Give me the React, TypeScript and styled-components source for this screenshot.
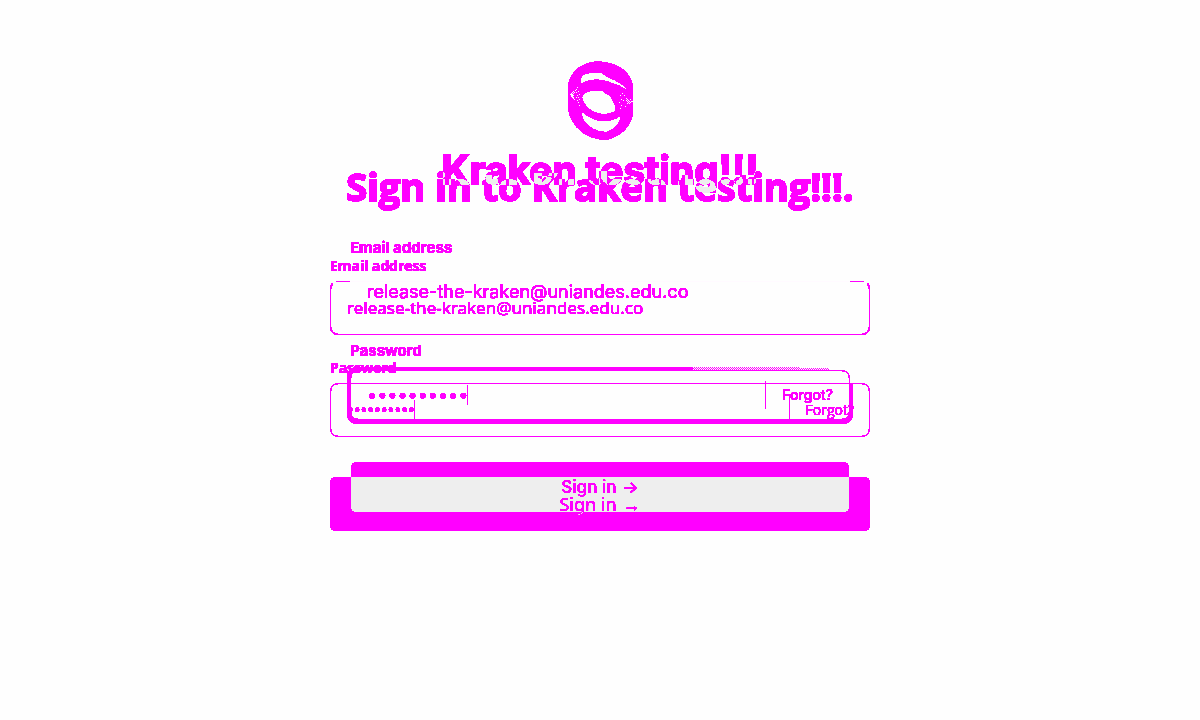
import React from 'react';
import styled, { createGlobalStyle, css } from 'styled-components';

const INK = '#ff00ff';

const GlobalStyle = createGlobalStyle`
  *, *::before, *::after { box-sizing: border-box; }
  html, body { margin: 0; min-height: 100%; background: #fefefe; }
`;

/* Turns every partly covered pixel into a fully inked one. */
const hardEdge = css`
  filter: url(#hard-edge);
`;

const Page = styled.main`
  min-height: 100vh;
  padding: 50px 16px;
  display: flex;
  flex-direction: column;
  align-items: center;
  isolation: isolate;
  filter: url(#diff-colours);
`;

const Defs = styled.svg`
  position: absolute;
  width: 0;
  height: 0;
`;

const Logo = styled.svg`
  width: 100px;
  height: 100px;
  flex: none;
`;

const Versions = styled.div`
  width: 100%;
  display: grid;
  justify-items: center;
  align-items: start;
`;

type Side = { $after?: boolean };

const Form = styled.form<Side>`
  grid-area: 1 / 1;
  width: 100%;
  max-width: ${p => (p.$after ? 500 : 540)}px;
  padding-top: ${p => (p.$after ? 0 : 16)}px;
  display: flex;
  flex-direction: column;
  font-family: ${p => (p.$after ? 'Inter' : '"Noto Sans"')}, sans-serif;
  color: ${INK};
`;

const Title = styled.h1<Side>`
  margin: 0 0 ${p => (p.$after ? 48 : 50)}px;
  font-family: ${p => (p.$after ? 'Inter' : '"Open Sans"')}, sans-serif;
  font-size: ${p => (p.$after ? 39 : 38)}px;
  line-height: 40px;
  font-weight: 700;
  -webkit-text-stroke: 1px ${INK};
  text-align: center;
  white-space: nowrap;
  align-self: center;
  ${hardEdge}
  mix-blend-mode: ${p => (p.$after ? 'difference' : 'normal')};
`;

const Label = styled.label<Side>`
  margin-bottom: ${p => (p.$after ? 9 : 5)}px;
  font-size: ${p => (p.$after ? 15 : 14)}px;
  line-height: 20px;
  font-weight: 700;
  ${hardEdge}
`;

const Field = styled.div<Side & { $merged?: boolean; $focused?: boolean }>`
  position: relative;
  height: ${p => (p.$after ? 50 : 54)}px;
  margin-bottom: ${p => (p.$after ? 24 : 23)}px;
  padding: 0 ${p => (p.$after ? 16 : 15)}px 0 16px;
  display: flex;
  align-items: center;
  border: 1px solid ${p => (p.$after && !p.$focused ? 'transparent' : INK)};
  border-radius: 8px;
  ${hardEdge}
  ${p => p.$merged && css`
    border-top-color: transparent;
    background: linear-gradient(90deg, ${INK} 14px, #fafafa 14px, #fafafa calc(100% - 14px), ${INK} calc(100% - 14px))
      center top / calc(100% - 12px) 1px no-repeat border-box;
  `}
`;

const FocusRing = styled.span`
  position: absolute;
  inset: -4px -4px -5px;
  border: 4px solid ${INK};
  border-radius: 10px;
  clip-path: polygon(0 0, 346px 0, 346px 16px, 100% 16px, 100% 100%, 0 100%);
  pointer-events: none;
`;

const RingFade = styled.span`
  position: absolute;
  top: -4px;
  right: 20px;
  width: 136px;
  height: 3px;
  background: repeating-conic-gradient(${INK} 0 25%, transparent 0 50%) 0 0 / 2px 2px;
  clip-path: polygon(0 0, 50% 0, 100% 60%, 100% 100%, 0 100%);
`;

const Input = styled.input<{ $width?: number }>`
  ${p => (p.$width ? css`width: ${p.$width}px; flex: none;` : css`flex: 1; min-width: 0;`)}
  height: 28px;
  padding: 0 0 2px;
  border: 0;
  outline: 0;
  background: none;
  font-family: inherit;
  font-size: 18px;
  color: ${INK};
`;

const EmailInput = styled(Input)<Side>`
  font-size: ${p => (p.$after ? 18 : 17)}px;
`;

const Caret = styled.span`
  width: 1px;
  height: 20px;
  background: ${INK};
`;

const Forgot = styled.a<Side>`
  margin-left: auto;
  padding-left: 16px;
  border-left: 1px solid ${INK};
  font-family: ${p => (p.$after ? 'Inter' : '"Open Sans"')}, sans-serif;
  font-size: 14px;
  font-weight: ${p => (p.$after ? 500 : 400)};
  line-height: 28px;
  color: ${INK};
  text-decoration: none;
`;

/* The caption is knocked out, so it shows wherever the two buttons overlap. */
const Submit = styled.button<Side>`
  height: ${p => (p.$after ? 50 : 54)}px;
  margin: ${p => (p.$after ? '18px 1px 0' : '17px 0 0')};
  padding: 0;
  display: flex;
  align-items: center;
  justify-content: center;
  gap: 6px;
  border: 0;
  border-radius: 6px;
  background: ${INK};
  color: #000;
  font-family: inherit;
  font-size: ${p => (p.$after ? 17 : 18)}px;
  font-weight: ${p => (p.$after ? 500 : 400)};
  ${hardEdge}
  mix-blend-mode: ${p => (p.$after ? 'difference' : 'normal')};
`;

const specks = [
  [70, 124], [67, 127], [73, 127], [64, 130], [70, 130], [61, 133], [64, 133], [67, 133], [64, 136],
  [67, 136], [70, 136], [64, 139], [67, 139], [67, 142], [70, 142], [70, 145], [73, 148], [76, 121],
  [82, 112], [79, 118], [79, 127], [85, 124], [82, 136], [88, 133], [79, 142],
  [85, 142], [82, 151], [88, 148], [85, 157], [88, 166],
  [210, 136], [216, 130], [222, 136], [213, 148], [219, 151], [207, 157], [213, 166], [210, 175],
  [228, 145], [228, 151], [231, 148], [231, 154], [231, 160], [234, 151], [234, 157], [237, 154],
  [237, 160], [240, 148], [240, 157], [243, 154], [246, 154], [225, 169],
];

const Login = ({ after = false }: { after?: boolean }) => {
  const id = after ? 'after' : 'before';
  return (
    <Form $after={after} onSubmit={e => e.preventDefault()}>
      <Title $after={after}>{after ? 'Kraken testing!!!' : 'Sign in to Kraken testing!!!.'}</Title>
      <Label $after={after} htmlFor={`${id}-email`}>Email address</Label>
      <Field $after={after} $merged={!after}>
        <EmailInput $after={after} id={`${id}-email`} type="email" defaultValue="release-the-kraken@uniandes.edu.co" />
      </Field>
      <Label $after={after} htmlFor={`${id}-password`}>Password</Label>
      <Field $after={after} $focused={after}>
        {after && <><FocusRing /><RingFade /></>}
        <Input id={`${id}-password`} type="password" defaultValue="kraken1234" $width={after ? 100 : 67} />
        <Caret />
        <Forgot $after={after} href="#forgot">Forgot?</Forgot>
      </Field>
      <Submit $after={after} type="submit"><span>Sign in</span><span>→</span></Submit>
    </Form>
  );
};

export default function App() {
  return (
    <>
      <GlobalStyle />
      <Defs aria-hidden="true">
        <filter id="hard-edge" colorInterpolationFilters="sRGB">
          <feComponentTransfer><feFuncA type="linear" slope="30" intercept="-1" /></feComponentTransfer>
        </filter>
        <filter id="diff-colours" x="0" y="0" width="100%" height="100%" colorInterpolationFilters="sRGB">
          <feComponentTransfer>
            <feFuncR type="linear" slope="12" intercept="-1" />
            <feFuncB type="linear" slope="12" intercept="-1" />
          </feComponentTransfer>
          <feColorMatrix values="0.065 0 0 0 0.935  -0.935 1 0 0 0.935  0.065 0 0 0 0.935  0 0 0 1 0" />
        </filter>
      </Defs>
      <Page>
        <Logo viewBox="0 0 300 300" role="img" aria-label="Logo" shapeRendering="crispEdges">
          <path fill={INK} fillRule="evenodd" d="M143 33C165 35 186 38 206 48C228 60 244 80 249 104L249 195C243 222 228 244 205 256Q185 269 165 270L148 269C112 264 82 243 65 212Q54 192 54 174L54 100C60 74 78 53 104 42Q121 35 143 33Z
            M93 101L94 85Q98 74 113 71Q136 67 155 69L168 80L195 92Q225 108 228 118Q210 104 192 101Q165 88 137 88Q112 89 93 101Z
            M97 142Q105 124 130 123L156 122L164 131L180 138L189 155L197 174L193 184Q175 193 156 191Q130 188 112 170Q100 158 97 142Z
            M95 186Q115 204 146 213Q180 219 210 200Q211 209 203 221Q191 238 169 245Q143 245 121 230Q97 213 95 186Z" />
          {specks.map(([x, y]) => <rect key={`${x}-${y}`} x={x} y={y} width="3" height="3" fill="#fff" />)}
        </Logo>
        <Versions>
          <Login />
          <Login after />
        </Versions>
      </Page>
    </>
  );
}
